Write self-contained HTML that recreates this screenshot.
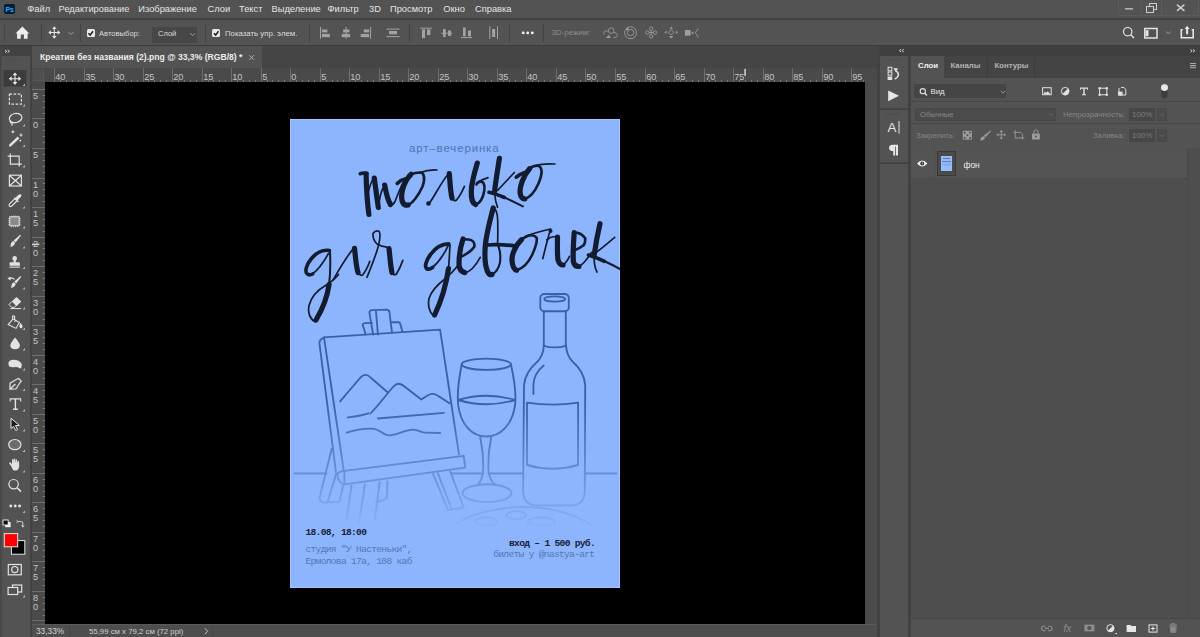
<!DOCTYPE html>
<html><head><meta charset="utf-8">
<style>
*{margin:0;padding:0;box-sizing:border-box}
html,body{width:1200px;height:637px;overflow:hidden;background:#535353;font-family:"Liberation Sans",sans-serif;position:relative}
.a{position:absolute}
.t{position:absolute;white-space:pre;line-height:1;font-family:"Liberation Sans",sans-serif}
.m{font-size:9.3px;color:#e4e4e4;top:4.6px}
svg{position:absolute;overflow:visible}
</style></head><body>
<!-- ===== MENU BAR ===== -->
<div class="a" style="left:0;top:0;width:1200px;height:18px;background:#535353"></div>
<div class="a" style="left:0;top:18px;width:1200px;height:2px;background:#404040"></div>
<!-- PS logo -->
<div class="a" style="left:4px;top:4px;width:11px;height:10px;background:#001e36;border-radius:2px"></div>
<div class="t" style="left:5.6px;top:5.6px;font-size:7px;font-weight:700;color:#31a8ff;letter-spacing:-0.3px">Ps</div>
<div class="t m" style="left:27.3px">Файл</div>
<div class="t m" style="left:58.6px">Редактирование</div>
<div class="t m" style="left:138.3px">Изображение</div>
<div class="t m" style="left:207.5px">Слои</div>
<div class="t m" style="left:239px">Текст</div>
<div class="t m" style="left:271.5px">Выделение</div>
<div class="t m" style="left:327.5px">Фильтр</div>
<div class="t m" style="left:369px">3D</div>
<div class="t m" style="left:390px">Просмотр</div>
<div class="t m" style="left:443.3px">Окно</div>
<div class="t m" style="left:475px">Справка</div>

<!-- ===== OPTIONS BAR ===== -->
<div class="a" style="left:0;top:20px;width:1200px;height:25px;background:#535353"></div>
<div class="a" style="left:0;top:45px;width:1200px;height:1px;background:#3c3c3c"></div>


<div class="a" style="left:4px;top:24px;width:1px;height:17px;background:#474747"></div>
<div class="a" style="left:41px;top:24px;width:1px;height:18px;background:#444"></div>
<div class="a" style="left:80px;top:24px;width:1px;height:18px;background:#444"></div>
<div class="a" style="left:205px;top:24px;width:1px;height:18px;background:#444"></div>
<div class="a" style="left:309px;top:24px;width:1px;height:18px;background:#444"></div>
<div class="a" style="left:409px;top:24px;width:1px;height:18px;background:#444"></div>
<div class="a" style="left:509px;top:24px;width:1px;height:18px;background:#444"></div>
<div class="a" style="left:543px;top:24px;width:1px;height:18px;background:#444"></div>
<!-- checkbox 1 -->
<div class="a" style="left:86.5px;top:29px;width:8px;height:8px;background:#e8e8e8;border-radius:1.5px"></div>
<div class="t" style="left:99px;top:29.8px;font-size:7.6px;color:#dcdcdc">Автовыбор:</div>
<!-- dropdown -->
<div class="a" style="left:152px;top:27px;width:45px;height:16px;background:#474747"></div>
<div class="t" style="left:158px;top:29.8px;font-size:7.5px;color:#dcdcdc">Слой</div>
<!-- checkbox 2 -->
<div class="a" style="left:212px;top:29px;width:8px;height:8px;background:#e8e8e8;border-radius:1.5px"></div>
<div class="t" style="left:225px;top:29.8px;font-size:7.8px;color:#dcdcdc">Показать упр. элем.</div>
<div class="t" style="left:551.3px;top:29.1px;font-size:8px;color:#8c8c8c">3D-режим:</div>

<!-- ===== TOOLBAR ===== -->
<div class="a" style="left:0;top:46px;width:30px;height:591px;background:#535353"></div>
<div class="a" style="left:0;top:46px;width:30px;height:10px;background:#424242"></div>
<div class="a" style="left:30px;top:46px;width:2px;height:591px;background:#424242"></div>

<!-- ===== DOCUMENT AREA ===== -->
<div class="a" style="left:32px;top:46px;width:845px;height:22px;background:#454545"></div>
<div class="a" style="left:32px;top:46px;width:230px;height:22px;background:#535353"></div>
<!-- rulers -->
<div class="a" style="left:32px;top:68px;width:845px;height:14px;background:#4a4a4a"></div>
<div class="a" style="left:32px;top:82px;width:13px;height:542px;background:#4a4a4a"></div>
<div class="a" style="left:32.5px;top:69px;width:11.5px;height:12px;background:#4f4f4f;border-right:1px solid #575757;border-bottom:1px solid #575757"></div>
<!-- pasteboard -->
<div class="a" style="left:45px;top:82px;width:820px;height:542px;background:#000"></div>
<div class="a" style="left:865px;top:82px;width:12px;height:542px;background:#4b4b4b"></div>
<!-- status bar -->
<div class="a" style="left:32px;top:624px;width:845px;height:13px;background:#4e4e4e"></div>

<!-- ===== DOCK ===== -->
<div class="a" style="left:877px;top:46px;width:3px;height:591px;background:#424242"></div>
<div class="a" style="left:880px;top:46px;width:320px;height:10px;background:#3f3f3f"></div>
<div class="a" style="left:880px;top:56px;width:28px;height:581px;background:#535353"></div>
<div class="a" style="left:908px;top:56px;width:3px;height:581px;background:#424242"></div>
<div class="a" style="left:911px;top:56px;width:289px;height:22px;background:#444444"></div>
<div class="a" style="left:911px;top:56px;width:33px;height:22px;background:#535353"></div>
<div class="a" style="left:911px;top:78px;width:289px;height:559px;background:#4e4e4e"></div>
<div class="a" style="left:911px;top:78px;width:289px;height:70px;background:#535353"></div>


<!-- tab title -->
<div class="t" style="left:40px;top:53.2px;font-size:8.6px;font-weight:700;color:#ececec">Креатив без названия (2).png @ 33,3% (RGB/8) *</div>
<!-- status bar -->
<div class="a" style="left:32px;top:624px;width:845px;height:1px;background:#5a5a5a"></div>
<div class="a" style="left:69px;top:625px;width:1px;height:12px;background:#474747"></div>
<div class="a" style="left:212px;top:625px;width:1px;height:12px;background:#474747"></div>
<div class="t" style="left:36px;top:627.4px;font-size:8.3px;color:#d6d6d6">33,33%</div>
<div class="t" style="left:89px;top:627.6px;font-size:7.8px;color:#cfcfcf">55,99 см x 79,2 см (72 ppi)</div>
<!-- layers panel -->
<div class="t" style="left:918px;top:61.6px;font-size:7.8px;font-weight:700;color:#f0f0f0">Слои</div>
<div class="t" style="left:950.5px;top:61.6px;font-size:7.8px;font-weight:700;color:#b4b4b4">Каналы</div>
<div class="t" style="left:994.6px;top:61.6px;font-size:7.8px;font-weight:700;color:#b4b4b4">Контуры</div>
<div class="a" style="left:986.5px;top:57px;width:1px;height:21px;background:#3c3c3c"></div>
<div class="a" style="left:1034px;top:57px;width:1px;height:21px;background:#3c3c3c"></div>
<div class="a" style="left:914.3px;top:84.4px;width:92px;height:14px;background:#454545"></div>
<div class="t" style="left:930.5px;top:88.2px;font-size:7.8px;color:#e8e8e8">Вид</div>
<div class="a" style="left:911px;top:100.5px;width:289px;height:1px;background:#474747"></div>
<div class="a" style="left:914.5px;top:107.6px;width:141px;height:13.6px;background:#4b4b4b;border:1px solid #474747"></div>
<div class="t" style="left:920px;top:110.6px;font-size:7.6px;color:#868686">Обычные</div>
<div class="t" style="left:1063px;top:110.8px;font-size:7.9px;color:#878787">Непрозрачность:</div>
<div class="a" style="left:1129px;top:108px;width:26px;height:12.5px;background:#474747"></div>
<div class="a" style="left:1157px;top:108px;width:10px;height:12.5px;background:#4b4b4b;border:1px solid #474747"></div>
<div class="t" style="left:1132px;top:110.6px;font-size:7.9px;color:#7e7e7e">100%</div>
<div class="a" style="left:911px;top:123px;width:289px;height:1px;background:#474747"></div>
<div class="t" style="left:916px;top:131.6px;font-size:7.7px;color:#878787">Закрепить:</div>
<div class="t" style="left:1093px;top:132.2px;font-size:7.6px;color:#878787">Заливка:</div>
<div class="a" style="left:1129px;top:129px;width:26px;height:13px;background:#474747"></div>
<div class="a" style="left:1157px;top:129px;width:10px;height:13px;background:#4b4b4b;border:1px solid #474747"></div>
<div class="t" style="left:1132px;top:131.8px;font-size:7.9px;color:#7e7e7e">100%</div>
<!-- layer row -->
<div class="a" style="left:911px;top:148px;width:276px;height:30.5px;background:#545454"></div>
<div class="a" style="left:934px;top:148px;width:1px;height:30.8px;background:#4e4e4e"></div>
<div class="a" style="left:1187px;top:148px;width:13px;height:470px;background:#4e4e4e;border-left:1px solid #484848"></div>
<div class="a" style="left:911px;top:178.4px;width:276px;height:1px;background:#494949"></div>
<div class="a" style="left:936.5px;top:150.8px;width:19px;height:25px;background:#4a4a4a;border:1px solid #383838"></div>
<div class="a" style="left:940.6px;top:155.8px;width:11.8px;height:15.5px;background:#96bcfd"></div>
<div class="a" style="left:943px;top:158.2px;width:7px;height:1px;background:#5b78b0"></div>
<div class="a" style="left:941.5px;top:160.6px;width:9.5px;height:1px;background:#5b78b0"></div>
<div class="a" style="left:942.5px;top:162.8px;width:8px;height:3.5px;background:#8aaee8"></div>
<div class="t" style="left:963.5px;top:160.6px;font-size:8.4px;color:#ececec">фон</div>
<!-- layers bottom bar -->
<div class="a" style="left:911px;top:618px;width:289px;height:19px;background:#535353;border-top:1px solid #464646"></div>

<!-- POSTER -->
<div class="a" style="left:289.5px;top:118.5px;width:330.5px;height:469px;background:#8cb5fd;overflow:hidden;box-shadow:inset 0 0 0 1px #a4c5fc">
<svg width="330.5" height="469" viewBox="289.5 118.5 330.5 469" style="left:0;top:0">
<defs>
<linearGradient id="fade" x1="0" y1="0" x2="0" y2="1" gradientUnits="objectBoundingBox">
<stop offset="0" stop-color="#fff"/>
<stop offset="0.47" stop-color="#fff"/>
<stop offset="1" stop-color="#000"/>
</linearGradient>
<mask id="m" maskUnits="userSpaceOnUse" x="289.5" y="290" width="330.5" height="240">
<rect x="289.5" y="290" width="330.5" height="240" fill="url(#fade)"/>
</mask>
</defs>

<!-- script lettering -->
<g fill="none" stroke="#121b30" stroke-linecap="round" stroke-linejoin="round">
<g stroke-width="5.2">
<path d="M365.6 173.5 C365.8 185 366.5 200 368.4 214"/>
<path d="M373.8 177.5 C375 186 376.5 198 377.8 207"/>
<path d="M384.2 184.6 C385.5 192 387.5 200 390 204"/>
<path d="M410.5 173.8 C404 180 400 192 401.5 200 Q403 205.5 407.5 204.5"/>
<path d="M448.8 173.2 C449.5 182 450 192 451.5 197.5"/>
<path d="M476.8 162.6 C474 172 471 182 470.8 190.5 C470.5 197 472 203 475.1 204"/>
<path d="M498.9 157.8 C497 170 495 182 494.1 191"/>
<path d="M529 168.2 C523 175 519 186 519.6 192.7 Q520.5 198.5 524.3 198.4"/>
<path d="M328.9 250 C322 249 316 252 311 258 C306 264 304.5 270 306 272.5 Q308 275.5 312 273.5" stroke-width="3.6"/>
<path d="M328.6 284 C327 295 323 307 315.5 319.5"/>
<path d="M354 247.8 C355 256 355.5 266 357.5 272"/>
<path d="M388.5 248 C389.5 256 390 266 391.5 272"/>
<path d="M448.2 243.4 C441 243.5 435 247 430 254 C425.5 260 424 266 426 268 Q428.5 269.5 432 267" stroke-width="3.8"/>
<path d="M448 268 C446 282 441 300 434.1 314.5"/>
<path d="M462.5 238.5 C460 246 458.5 256 458.5 264 Q459 271 464.4 272.1"/>
<path d="M492.7 207.4 C490 218 486 232 484.8 245 C484 255 484.5 265 487 271 Q489 275 491.5 274"/>
<path d="M521 239.2 C515 245 511 254 511.5 260.4 Q512.5 269 516.2 269.8"/>
<path d="M557 236.5 C557 245 556.5 253 557.5 259.5 Q559 264.5 562.5 264.5"/><path d="M573.7 232.2 C573 242 572.2 252 572.9 261.3 Q574 266 578.4 266"/>
<path d="M599.5 223.2 C597 234 595 245 593.6 255"/>
</g>
<g stroke-width="3.6">
<path d="M396.7 182.9 Q400 179.5 404.5 178.6"/>
<path d="M515.8 176.7 Q519.5 173.5 524.3 172"/>
<path d="M488.5 191.8 C494 193 499 195 504 197"/><path d="M503 196.6 C510 199.5 516 202.5 522.4 205.9" stroke-width="2"/>
<path d="M486.5 244.5 Q500 243.5 514 245.4"/>
<path d="M588 254.5 C594 256.5 599 258.5 604 260.8"/><path d="M603 260.3 C610 263.5 615 266 620.7 269.2" stroke-width="2.2"/>
<path d="M359.7 173.2 Q362.5 172.2 366.5 172.8"/>
</g>
<g stroke-width="2.6">
<path d="M407.5 204.5 C412 203 418 195 422 186 C425 178 423.5 172 420 172 Q414 172 410.5 173.8"/>
<path d="M524.3 198.4 C529 197 534 192 538 183 C541 176 542.5 168 538.4 165.4 Q533 164.5 529 168.2"/>
<path d="M475.1 204 C479 203 482.5 198 483.8 190 C484.6 184 483 180 478.5 181.5 Q476 182.5 476 184"/>
<path d="M516.2 269.8 C522 268 528 262 531.6 254.5 C535 247 537 240 536 237 Q533 233.5 527 235.5 Q523.5 237 521 239.2"/>
<path d="M462 255.6 C467 253 472 249.5 473.8 246.2 C474.5 242 472 239 468 239 Q464 239 462.5 238.5"/>
<path d="M573.7 232.2 Q580 231.5 584.7 237.7 Q585 242.5 583.1 244.8 Q579 248 574.5 249.5"/>
</g>
<g stroke-width="1.7">
<path d="M367 194 C369 186 371 180 373.5 177.5"/>
<path d="M378.6 201.5 C380 193 382 187 384.4 184.8"/>
<path d="M390 204 Q392.5 205 394.5 201 C397 195 400 186 404.5 178.6"/>
<path d="M419 172.2 Q428 169 436.5 169.5"/>
<path d="M427.6 203 Q430 202 432 198 C437 190 442 180 448.3 173"/>
<path d="M451.5 197.5 Q453.5 201.5 456 199.5 Q460 195 463.9 185.9"/>
<path d="M478 181 Q483 178.5 487.5 177.1"/>
<path d="M494.1 191 C494.3 198 495.5 203 497 206.8"/>
<path d="M513.9 172 C508 178 502 185 497 189.9"/>
<path d="M532.8 165.4 Q543 162.8 554.5 163.5"/>
<path d="M312 273.5 C318 269 323 262 328 253"/>
<path d="M329.5 250.5 C330 262 330 273 328.6 284" stroke-width="2"/>
<path d="M314 321 C309 318 307 311 308.5 305 C311 296 318 289 325 285 C330 282 334 279 338 274"/>
<path d="M332.5 279.7 C338 270 346 256 353.3 247.6"/>
<path d="M357.5 272 Q359.5 275.8 362 274.5 Q366 270 369.3 260.8"/>
<path d="M366.5 276.8 C370 268 375 256 377.8 245.7 C379.5 239 380 233 378.5 230.8 Q375 229.5 372.5 233 Q372 239 376.5 243.5 Q381 246 386.3 246.7"/>
<path d="M391.5 272 Q393 275.5 396 273.5 Q399.5 268 402.3 259.9"/>
<path d="M432 267 C438 262 443.5 254 448.2 244.1"/>
<path d="M449.5 244.5 C449 252 448.8 260 448 268"/>
<path d="M432.7 315 C428.5 311 427 304 428.5 298 C431 290 437 284 445 278 C451 273 455 268 459.5 262.5"/>
<path d="M464.4 272.1 Q472 271 479.7 256.8"/>
<path d="M492.7 207.4 Q497 209 497.2 220 C497.4 230 497.5 237 497 244"/><path d="M491.5 274 Q497.5 271 499.5 262 Q500.5 252 498 246" stroke-width="2.1"/>
<path d="M512 246 Q514 246.2 516 246"/>
<path d="M525.7 235.6 Q535 232 550 228.5"/>
<path d="M542.3 258.1 C544.5 249 547.5 237 550.1 229.1"/><path d="M546.2 239.3 Q551 235.5 556.4 236.1"/><path d="M562.5 264.5 Q566 262 569 255.8"/>
<path d="M578.4 266 Q584 263 591 251.9"/>
<path d="M593.6 255 C593.5 262 594.5 268 596.5 271.5"/>
<path d="M614.2 236.8 C607 243 599 250 591.2 255"/>
</g>
</g>
<circle cx="428" cy="203" r="2.3" fill="#121b30"/><circle cx="550" cy="230.6" r="2" fill="#121b30"/>

<!-- illustration -->
<g mask="url(#m)" fill="none" stroke="#3862a8" stroke-width="1.85" stroke-linecap="round" stroke-linejoin="round">
<!-- table -->
<path d="M294 473 H326 M450.5 473 H482.4 M487.8 473 H522.6 M584.4 473 H616"/>
<!-- easel post -->
<path d="M372.6 334 L368.9 312.3 Q369 309.8 371.5 309.6 L386.2 309.2 Q388.7 309.4 388.9 311.5 L391.5 332"/>
<path d="M375.5 311 L377.4 334"/>
<path d="M365.1 334 L362.3 324.4 Q362.4 322.8 364 322.7 L371.6 322.4"/>
<path d="M390.6 321.7 H398 Q399.4 321.8 399.6 323 L401.9 331.1"/>
<!-- canvas -->
<path d="M323.6 336.8 L439.6 329.2 L458.5 453.8"/>
<path d="M323.6 336.8 L320.4 339 Q318.7 340.4 318.9 342.6 L335.6 472.5"/>
<path d="M323.6 337.7 L343.2 469.7"/>
<!-- ledge -->
<path d="M343.9 470.4 L463.2 455.3 L464.7 467.1 L343.9 483.8"/>
<path d="M343.9 470.4 Q336.8 471 336.8 475 Q337.5 482 343.9 483.8 Z"/>
<!-- legs -->
<path d="M331.2 448.5 L319.2 496.5 Q318.8 501.5 322.5 502 L339 501.4 L342.5 485.5"/>
<path d="M335.4 474 L327 502"/>
<path d="M351 485.2 L346 520 M364.4 483.8 L358.7 522"/>
<path d="M379.2 481.7 L374.3 519 M387 481 L386.3 498 L375.7 502.1"/>
<path d="M432.6 473.4 L447.5 509.5 L463.2 507.1 L449.8 471 M437.3 472.6 L450.6 507.1"/>
<!-- mountains -->
<path d="M339.6 400.9 L360 377 Q365.1 371.6 370 377 L386.8 391.5"/>
<path d="M369.8 413.2 C378 405 385 395 393 386 Q398.1 380.5 404 386 L420.8 399 L427 395 Q432.1 391.8 437 395 L449 402.8"/>
<path d="M347.2 417 C356 415.8 362 415 367.9 412.8"/>
<path d="M377.4 418 L443.4 412.3"/>
<path d="M346.2 432.1 C356 429 366 427.5 373.6 428.3 C380 429.5 383 435 388.7 434.9 C398 434.5 405 428.8 413.2 429.2 C418 429.5 420 432.1 424.5 432.1 L439.6 432.5"/>
<!-- glass -->
<ellipse cx="485.8" cy="363.8" rx="24.6" ry="5.6"/>
<path d="M461.2 363.8 C458 380 456.5 395 457.8 405 C460.5 425 472 436 485.7 436 C499.5 436 511.5 425 514.5 405 C515.8 395 514 380 510.4 363.8"/>
<path d="M457.6 399.5 Q486 391 514.8 399.5 Q486 408 457.6 399.5"/>
<path d="M479.7 436.5 Q483 452 482.8 467.1 Q482.6 480 476.5 484.8 M490.6 437 Q487.5 452 487.8 467.1 Q488 480 495.5 484.6"/>
<ellipse cx="486.5" cy="492.6" rx="24.5" ry="8.9"/>
<!-- bottle -->
<rect x="539.8" y="293.5" width="28.5" height="17.2" rx="4"/>
<ellipse cx="554.2" cy="298.5" rx="10.5" ry="2.6"/>
<path d="M543.3 310.7 V345.3 M565.3 310.7 V345.3"/>
<path d="M543.3 345.3 Q554 348.4 565.5 345.3"/>
<path d="M543.3 345.3 C543 352 541 357 537 361 C530 367 524.3 374 523.5 385 L522.6 490 Q522.6 504.5 536 505 H571 Q584.3 504.5 584.3 490 L584.7 385 C584 374 579 367 572 361 C568 357 566 352 565.5 345.3"/>
<path d="M543.3 365.1 C537 370 533 376 532.9 385 V393.6"/>
<path d="M526.5 402.2 Q552 406 577.6 402.2 V464.5 Q552 472 526.5 464.5 Z"/>
<!-- plate -->
<path d="M455 523 C475 512 500 506.5 523.8 506.5 C550 506.5 575 514 592.5 525.8"/>
<ellipse cx="485.5" cy="521" rx="11" ry="4"/>
<ellipse cx="515.6" cy="514.6" rx="9.6" ry="4"/>
<ellipse cx="541" cy="521" rx="13.7" ry="4"/>
</g>
</svg>
<div class="t" style="left:119.5px;top:24.2px;font-size:11.5px;letter-spacing:0.85px;color:#5074b4">арт–вечеринка</div>

<div class="t" style="left:16px;top:409.8px;font-family:'Liberation Mono',monospace;font-size:9.6px;letter-spacing:-0.7px;font-weight:700;color:#16213b">18.08, 18:00</div>
<div class="t" style="left:16px;top:426.3px;font-family:'Liberation Mono',monospace;font-size:9.6px;letter-spacing:-0.7px;color:#5677b3">студия "У Настеньки",</div>
<div class="t" style="left:16px;top:438.8px;font-family:'Liberation Mono',monospace;font-size:9.6px;letter-spacing:-0.7px;color:#5677b3">Ермолова 17а, 108 каб</div>
<div class="t" style="right:25px;top:420.3px;font-family:'Liberation Mono',monospace;font-size:9.6px;letter-spacing:-0.7px;font-weight:700;color:#16213b">вход – 1 500 руб.</div>
<div class="t" style="right:25.6px;top:431.8px;font-family:'Liberation Mono',monospace;font-size:9.6px;letter-spacing:-0.7px;color:#5677b3">билеты у @nastya-art</div>
</div>



<!-- ===== ICON OVERLAY ===== -->
<svg class="a" style="left:0;top:0" width="1200" height="637" viewBox="0 0 1200 637">

<!-- rulers -->
<g fill="#c4c4c4" font-family="Liberation Sans" font-size="9.2">
<text x="55.2" y="80.2">40</text>
<text x="85.2" y="80.2">35</text>
<text x="114.2" y="80.2">30</text>
<text x="144.2" y="80.2">25</text>
<text x="173.2" y="80.2">20</text>
<text x="203.2" y="80.2">15</text>
<text x="232.2" y="80.2">10</text>
<text x="262.2" y="80.2">5</text>
<text x="291.2" y="80.2">0</text>
<text x="321.2" y="80.2">5</text>
<text x="350.2" y="80.2">10</text>
<text x="380.2" y="80.2">15</text>
<text x="409.2" y="80.2">20</text>
<text x="439.2" y="80.2">25</text>
<text x="468.2" y="80.2">30</text>
<text x="498.2" y="80.2">35</text>
<text x="527.2" y="80.2">40</text>
<text x="557.2" y="80.2">45</text>
<text x="586.2" y="80.2">50</text>
<text x="616.2" y="80.2">55</text>
<text x="646.2" y="80.2">60</text>
<text x="675.2" y="80.2">65</text>
<text x="705.2" y="80.2">70</text>
<text x="734.2" y="80.2">75</text>
<text x="764.2" y="80.2">80</text>
<text x="793.2" y="80.2">85</text>
<text x="823.2" y="80.2">90</text>
<text x="852.2" y="80.2">95</text>
<text x="32.9" y="98.9">5</text>
<text x="32.9" y="127.9">0</text>
<text x="32.9" y="157.9">5</text>
<text x="32.9" y="187.9">1</text>
<text x="32.9" y="197.3">0</text>
<text x="32.9" y="216.9">1</text>
<text x="32.9" y="226.3">5</text>
<text x="32.9" y="246.9">2</text>
<text x="32.9" y="256.3">0</text>
<text x="32.9" y="275.9">2</text>
<text x="32.9" y="285.3">5</text>
<text x="32.9" y="305.9">3</text>
<text x="32.9" y="315.3">0</text>
<text x="32.9" y="334.9">3</text>
<text x="32.9" y="344.3">5</text>
<text x="32.9" y="364.9">4</text>
<text x="32.9" y="374.3">0</text>
<text x="32.9" y="393.9">4</text>
<text x="32.9" y="403.3">5</text>
<text x="32.9" y="423.9">5</text>
<text x="32.9" y="433.3">0</text>
<text x="32.9" y="452.9">5</text>
<text x="32.9" y="462.3">5</text>
<text x="32.9" y="482.9">6</text>
<text x="32.9" y="492.3">0</text>
<text x="32.9" y="511.9">6</text>
<text x="32.9" y="521.3">5</text>
<text x="32.9" y="541.9">7</text>
<text x="32.9" y="551.3">0</text>
<text x="32.9" y="570.9">7</text>
<text x="32.9" y="580.3">5</text>
<text x="32.9" y="600.9">8</text>
<text x="32.9" y="610.3">0</text>
</g>
<path d="M54.5 68.5 V82 M84.5 68.5 V82 M113.5 68.5 V82 M143.5 68.5 V82 M172.5 68.5 V82 M202.5 68.5 V82 M231.5 68.5 V82 M261.5 68.5 V82 M290.5 68.5 V82 M320.5 68.5 V82 M349.5 68.5 V82 M379.5 68.5 V82 M408.5 68.5 V82 M438.5 68.5 V82 M467.5 68.5 V82 M497.5 68.5 V82 M526.5 68.5 V82 M556.5 68.5 V82 M585.5 68.5 V82 M615.5 68.5 V82 M645.5 68.5 V82 M674.5 68.5 V82 M704.5 68.5 V82 M733.5 68.5 V82 M763.5 68.5 V82 M792.5 68.5 V82 M822.5 68.5 V82 M851.5 68.5 V82 M32 89.5 H45 M32 118.5 H45 M32 148.5 H45 M32 178.5 H45 M32 207.5 H45 M32 237.5 H45 M32 266.5 H45 M32 296.5 H45 M32 325.5 H45 M32 355.5 H45 M32 384.5 H45 M32 414.5 H45 M32 443.5 H45 M32 473.5 H45 M32 502.5 H45 M32 532.5 H45 M32 561.5 H45 M32 591.5 H45 M32 620.5 H45" stroke="#6e6e6e" stroke-width="1"/>
<path d="M60.5 80 V82 M66.5 80 V82 M72.5 80 V82 M78.5 80 V82 M89.5 80 V82 M95.5 80 V82 M101.5 80 V82 M107.5 80 V82 M119.5 80 V82 M125.5 80 V82 M131.5 80 V82 M137.5 80 V82 M148.5 80 V82 M154.5 80 V82 M160.5 80 V82 M166.5 80 V82 M178.5 80 V82 M184.5 80 V82 M190.5 80 V82 M196.5 80 V82 M208.5 80 V82 M213.5 80 V82 M219.5 80 V82 M225.5 80 V82 M237.5 80 V82 M243.5 80 V82 M249.5 80 V82 M255.5 80 V82 M267.5 80 V82 M272.5 80 V82 M278.5 80 V82 M284.5 80 V82 M296.5 80 V82 M302.5 80 V82 M308.5 80 V82 M314.5 80 V82 M326.5 80 V82 M332.5 80 V82 M337.5 80 V82 M343.5 80 V82 M355.5 80 V82 M361.5 80 V82 M367.5 80 V82 M373.5 80 V82 M385.5 80 V82 M391.5 80 V82 M397.5 80 V82 M402.5 80 V82 M414.5 80 V82 M420.5 80 V82 M426.5 80 V82 M432.5 80 V82 M444.5 80 V82 M450.5 80 V82 M456.5 80 V82 M461.5 80 V82 M473.5 80 V82 M479.5 80 V82 M485.5 80 V82 M491.5 80 V82 M503.5 80 V82 M509.5 80 V82 M515.5 80 V82 M521.5 80 V82 M532.5 80 V82 M538.5 80 V82 M544.5 80 V82 M550.5 80 V82 M562.5 80 V82 M568.5 80 V82 M574.5 80 V82 M580.5 80 V82 M591.5 80 V82 M597.5 80 V82 M603.5 80 V82 M609.5 80 V82 M621.5 80 V82 M627.5 80 V82 M633.5 80 V82 M639.5 80 V82 M650.5 80 V82 M656.5 80 V82 M662.5 80 V82 M668.5 80 V82 M680.5 80 V82 M686.5 80 V82 M692.5 80 V82 M698.5 80 V82 M709.5 80 V82 M715.5 80 V82 M721.5 80 V82 M727.5 80 V82 M739.5 80 V82 M745.5 80 V82 M751.5 80 V82 M757.5 80 V82 M769.5 80 V82 M774.5 80 V82 M780.5 80 V82 M786.5 80 V82 M798.5 80 V82 M804.5 80 V82 M810.5 80 V82 M816.5 80 V82 M828.5 80 V82 M834.5 80 V82 M839.5 80 V82 M845.5 80 V82 M857.5 80 V82 M863.5 80 V82 M42.5 95.5 H45 M42.5 101.5 H45 M42.5 107.5 H45 M42.5 113.5 H45 M42.5 124.5 H45 M42.5 130.5 H45 M42.5 136.5 H45 M42.5 142.5 H45 M42.5 154.5 H45 M42.5 160.5 H45 M42.5 166.5 H45 M42.5 172.5 H45 M42.5 183.5 H45 M42.5 189.5 H45 M42.5 195.5 H45 M42.5 201.5 H45 M42.5 213.5 H45 M42.5 219.5 H45 M42.5 225.5 H45 M42.5 231.5 H45 M42.5 243.5 H45 M42.5 248.5 H45 M42.5 254.5 H45 M42.5 260.5 H45 M42.5 272.5 H45 M42.5 278.5 H45 M42.5 284.5 H45 M42.5 290.5 H45 M42.5 302.5 H45 M42.5 307.5 H45 M42.5 313.5 H45 M42.5 319.5 H45 M42.5 331.5 H45 M42.5 337.5 H45 M42.5 343.5 H45 M42.5 349.5 H45 M42.5 361.5 H45 M42.5 367.5 H45 M42.5 372.5 H45 M42.5 378.5 H45 M42.5 390.5 H45 M42.5 396.5 H45 M42.5 402.5 H45 M42.5 408.5 H45 M42.5 420.5 H45 M42.5 426.5 H45 M42.5 431.5 H45 M42.5 437.5 H45 M42.5 449.5 H45 M42.5 455.5 H45 M42.5 461.5 H45 M42.5 467.5 H45 M42.5 479.5 H45 M42.5 485.5 H45 M42.5 491.5 H45 M42.5 496.5 H45 M42.5 508.5 H45 M42.5 514.5 H45 M42.5 520.5 H45 M42.5 526.5 H45 M42.5 538.5 H45 M42.5 544.5 H45 M42.5 550.5 H45 M42.5 556.5 H45 M42.5 567.5 H45 M42.5 573.5 H45 M42.5 579.5 H45 M42.5 585.5 H45 M42.5 597.5 H45 M42.5 603.5 H45 M42.5 609.5 H45 M42.5 615.5 H45" stroke="#7a7a7a" stroke-width="1"/>
<rect x="744.3" y="68.8" width="1.6" height="7.1" fill="#cfcfcf"/>
<rect x="32" y="243.6" width="7.3" height="1.6" fill="#cfcfcf"/>
<!-- toolbar -->
<rect x="0" y="46" width="1.6" height="591" fill="#474747"/>
<path d="M5 50 L6.8 51.3 L5 52.6 M7.6 50 L9.4 51.3 L7.6 52.6" fill="none" stroke="#dcdcdc" stroke-width="0.9"/>
<line x1="7" y1="60.3" x2="22" y2="60.3" stroke="#4a4a4a" stroke-width="1" stroke-dasharray="1 1"/>
<rect x="3.4" y="70" width="23" height="16.6" fill="#3c3c3c"/>
<g fill="#b4b4b4">
<path d="M25 83.5 V86 H22.5Z"/><path d="M25 104 V106.5 H22.5Z"/><path d="M25 124 V126.5 H22.5Z"/><path d="M25 144.5 V147 H22.5Z"/>
<path d="M25 165 V167.5 H22.5Z"/><path d="M25 206 V208.5 H22.5Z"/><path d="M25 226 V228.5 H22.5Z"/><path d="M25 246 V248.5 H22.5Z"/>
<path d="M25 266.5 V269 H22.5Z"/><path d="M25 287 V289.5 H22.5Z"/><path d="M25 307 V309.5 H22.5Z"/><path d="M25 327.5 V330 H22.5Z"/>
<path d="M25 348 V350.5 H22.5Z"/><path d="M25 368 V370.5 H22.5Z"/><path d="M25 388.5 V391 H22.5Z"/><path d="M25 409 V411.5 H22.5Z"/>
<path d="M25 429 V431.5 H22.5Z"/><path d="M25 449.5 V452 H22.5Z"/><path d="M25 470 V472.5 H22.5Z"/><path d="M25 510.5 V513 H22.5Z"/>
<path d="M25 595 V597.5 H22.5Z"/>
</g>
<!-- move -->
<path d="M15 73.8 V83.6 M10.2 78.7 H19.8" stroke="#e8e8e8" stroke-width="1.1"/>
<path d="M15 72.5 l-2.4 2.8 h4.8z M15 84.9 l-2.4 -2.8 h4.8z M8.8 78.7 l2.8 -2.4 v4.8z M21.2 78.7 l-2.8 -2.4 v4.8z" fill="#e8e8e8"/>
<g fill="none" stroke="#e2e2e2" stroke-width="1.2">
<!-- marquee -->
<rect x="9.4" y="94.2" width="12" height="10" stroke-dasharray="2.6 1.6"/>
<!-- lasso -->
<ellipse cx="15.6" cy="118" rx="6.3" ry="4.6" transform="rotate(-12 15.6 118)"/>
<path d="M10.6 120.5 C9.5 122.5 11 123.5 12 122.5 C12.5 123.8 12 124.8 11.8 125.6"/>
<!-- crop -->
<path d="M10.3 153.6 V164.2 H21.9 M7.7 156.2 H19.2 V166.6"/>
<!-- frame -->
<rect x="9.4" y="175.2" width="12" height="10.8"/>
<path d="M9.4 175.2 L21.4 186 M21.4 175.2 L9.4 186"/>
<!-- eyedropper -->
<path d="M14.6 198.8 L9.6 203.8 Q8.6 205.4 9.4 206.2 Q10.2 207 11.8 206 L16.8 201"/>
<!-- pen -->
<path d="M18.6 378.5 L21.3 381.2 L20 382.5 L16 389 L9.9 389.2 L10.1 383.2 L16.6 379.2 Z M10.2 389 L14.2 385"/>
<!-- zoom -->
<circle cx="13.6" cy="484.2" r="4.7"/>
<path d="M16.9 487.5 L21 491.6" stroke-width="1.5"/>
<!-- ellipse -->
<ellipse cx="14.8" cy="444.6" rx="6.1" ry="5.1" fill="#6c6c6c"/>
<!-- quick mask -->
<rect x="8.3" y="564.5" width="13" height="10.3"/>
<circle cx="14.8" cy="569.6" r="3.1"/>
<!-- screen mode -->
<rect x="12.5" y="585" width="9.2" height="7"/>
<rect x="8.1" y="587.5" width="9.6" height="7" fill="#535353"/>
</g>
<g fill="#e2e2e2">
<!-- magic wand -->
<path d="M9.6 144.2 L17.6 136.6 L19.4 138.4 L11.3 146 Q10 147 9.2 146.2 Q8.6 145.2 9.6 144.2Z"/>
<path d="M12.9 129.6 L13.5 131.2 L15.1 131.8 L13.5 132.4 L12.9 134 L12.3 132.4 L10.7 131.8 L12.3 131.2Z"/>
<path d="M21 132.8 L21.6 134.4 L23.2 135 L21.6 135.6 L21 137.2 L20.4 135.6 L18.8 135 L20.4 134.4Z"/>
<circle cx="20.3" cy="140.6" r="0.9"/>
<!-- eyedropper cap -->
<path d="M15.4 197.8 L18.6 194.8 Q20.4 193.6 21.2 194.6 Q22 195.6 20.6 197.2 L17.6 200.2 L19 201.6 L18 202.6 L13.8 198.4 L14.8 197.2Z"/>
<!-- healing -->
<rect x="9.8" y="216.8" width="9.4" height="9" fill="#8a8a8a" stroke="#e2e2e2" stroke-width="1"/>
<!-- brush -->
<path d="M20.2 234.8 L21 235.6 L15.6 242.4 L13.6 240.6 Z"/>
<path d="M13.2 241 L15.2 242.8 Q14.6 245.6 12.2 246.4 Q10.6 246.8 10.2 246.6 Q10.8 245.8 10.8 244.2 Q11 242 13.2 241Z"/>
<!-- stamp -->
<circle cx="14.7" cy="258.4" r="2.3"/>
<rect x="13.7" y="259.5" width="2" height="3.5"/>
<path d="M9.6 263.2 Q9.6 262.2 11 262.2 H18.6 Q19.9 262.2 19.9 263.4 V265.8 H9.6Z"/>
<rect x="9.6" y="266.6" width="10.3" height="1.1"/>
<!-- history brush -->
<path d="M20.6 276 L21.3 276.8 L16.2 283.6 L14.2 281.8 Z"/>
<path d="M13.8 282.2 L15.8 284 Q15.2 286.8 12.8 287.6 Q11.2 288 10.8 287.8 Q11.4 287 11.4 285.4 Q11.6 283.2 13.8 282.2Z"/>
<path d="M7.4 278.6 L10.6 276.4 L10.6 280.6Z"/><path d="M10 278.4 Q13.4 277.6 14.4 279.6" fill="none" stroke="#e2e2e2" stroke-width="1.1"/>
<!-- eraser -->
<path d="M16.4 297 L21.3 301.4 L16.6 306.2 L11.8 301.6Z"/>
<!-- blur drop -->
<path d="M15.1 337.6 Q19.9 343.2 19.9 345.6 Q19.9 349.2 15.1 349.2 Q10.3 349.2 10.3 345.6 Q10.3 343.2 15.1 337.6Z"/>
<!-- dodge -->
<path d="M13.6 359.8 Q19.2 359.8 21.9 364.2 L21.2 368.2 L19.4 368.2 Q17.8 366.4 13.6 367.2 Q8.4 367.6 8.4 363.4 Q8.6 359.8 13.6 359.8Z"/>
<!-- type -->
<path d="M9.6 398.3 H21.2 V401.6 H20.1 V399.6 H16.1 V408.6 H17.8 V409.9 H13 V408.6 H14.7 V399.6 H10.7 V401.6 H9.6Z"/>
<!-- hand -->
<path d="M11.6 466.8 L9.2 463.4 Q8.8 462.2 10 462.2 L12 464 V459.8 Q12.4 458.8 13.2 459.6 V463.6 L13.6 459 Q14.2 458 15 459 V463.4 L15.6 459.6 Q16.4 458.8 17 459.8 V463.6 L17.6 461.2 Q18.4 460.4 19 461.4 L19.2 466 Q19 469.6 16.6 470.6 H13.6 Q12.4 469.6 11.6 466.8Z"/>
<!-- dots -->
<circle cx="10.8" cy="506" r="1.45"/><circle cx="15.2" cy="506" r="1.45"/><circle cx="19.6" cy="506" r="1.45"/>
</g>
<!-- eyedropper tube outline -->
<!-- healing teeth -->
<path d="M11.5 215.6 V217 M13.5 215.6 V217 M15.5 215.6 V217 M17.5 215.6 V217 M11.5 225.8 V227.2 M13.5 225.8 V227.2 M15.5 225.8 V227.2 M17.5 225.8 V227.2 M8.4 218.6 H9.8 M8.4 220.6 H9.8 M8.4 222.6 H9.8 M8.4 224.6 H9.8 M19.2 218.6 H20.6 M19.2 220.6 H20.6 M19.2 222.6 H20.6 M19.2 224.6 H20.6" stroke="#e2e2e2" stroke-width="0.7"/>
<!-- eraser bottom -->
<path d="M11.8 301.6 L9 304.6 L11.6 307.4 L14.2 307.4 L16.6 305.2 M10.4 308.6 H21.2" fill="none" stroke="#e2e2e2" stroke-width="1"/>
<!-- bucket -->
<path d="M13 319 L19.4 322.4 L16 328.4 L8.2 324.6 Z M13 319 L12.4 316.6 Q13.6 315.2 14.6 316.4 L14.8 322" fill="none" stroke="#e2e2e2" stroke-width="1.1"/>
<path d="M20.4 322.8 Q22.6 325.2 22.6 326.6 Q22.6 328.4 21 328.4 Q19.4 328.4 19.4 326.6 Q19.4 325.2 20.4 322.8Z" fill="#e2e2e2"/>
<!-- pen nib detail -->
<circle cx="14.8" cy="384.6" r="0.9" fill="#e2e2e2"/>
<!-- path select arrow -->
<path d="M11 418.3 V428.6 L13.6 426.4 L15.8 430.5 L17.6 429.6 L15.4 425.6 L19.3 425.4 Z" fill="#1a1a1a" stroke="#e8e8e8" stroke-width="1"/>
<!-- default colors -->
<rect x="5.2" y="522" width="5.4" height="5.2" fill="#f0f0f0"/>
<rect x="3" y="520" width="5.2" height="5" fill="#111" stroke="#f0f0f0" stroke-width="0.9"/>
<path d="M18 521.6 H21.4 Q22.8 521.6 22.8 523 V526.6 M16.6 522.8 L18 521.4 L16.6 520.4 M21.6 525.4 L22.8 527.2 L24 525.4" fill="none" stroke="#e0e0e0" stroke-width="0.9"/>
<!-- fg/bg -->
<rect x="11.4" y="540.6" width="13.4" height="13.6" fill="#000" stroke="#e6e6e6" stroke-width="1"/>
<rect x="4.3" y="533.6" width="13.4" height="13.2" fill="#ff0000" stroke="#e6e6e6" stroke-width="1"/>


<!-- tab close -->
<path d="M249.3 55.2 L253.9 59.8 M253.9 55.2 L249.3 59.8" stroke="#b8b8b8" stroke-width="0.9"/>
<!-- status chevron -->
<path d="M204.8 628.2 L207.6 631.2 L204.8 634.2" fill="none" stroke="#c0c0c0" stroke-width="1"/>
<!-- dock header -->
<path d="M901.2 49.2 L899.4 50.6 L901.2 52 M903.8 49.2 L902 50.6 L903.8 52" fill="none" stroke="#d8d8d8" stroke-width="0.9"/>
<path d="M1190.4 49.4 L1192.2 50.8 L1190.4 52.2 M1193 49.4 L1194.8 50.8 L1193 52.2" fill="none" stroke="#d8d8d8" stroke-width="0.9"/>
<!-- narrow column -->
<rect x="880" y="108.4" width="28" height="1.4" fill="#3f3f3f"/>
<rect x="880" y="162.6" width="28" height="1.4" fill="#3f3f3f"/>
<line x1="886" y1="60" x2="900" y2="60" stroke="#474747" stroke-width="1.2" stroke-dasharray="1 0.8"/>
<line x1="886" y1="113.8" x2="900" y2="113.8" stroke="#474747" stroke-width="1.2" stroke-dasharray="1 0.8"/>
<g fill="none" stroke="#e2e2e2" stroke-width="1">
<rect x="888.1" y="67.3" width="3.7" height="3.5"/>
<rect x="888.1" y="72" width="3.7" height="3.2"/>
<path d="M895.2 70.4 Q898.8 72.4 898.3 75.4 Q897.6 78.2 894.7 79" stroke-width="1.6"/>
</g>
<rect x="887.6" y="76.5" width="4.6" height="3.5" fill="#e2e2e2"/>
<path d="M893.5 67.9 L898.2 68.5 L895.5 71.8Z" fill="#e2e2e2"/>
<path d="M888.2 90.4 L899 95.8 L888.2 101.2Z" fill="#e6e6e6"/>
<text x="887.6" y="131.8" font-family="Liberation Sans" font-size="13.4" fill="#e6e6e6">A</text>
<rect x="898.5" y="121" width="1" height="12.6" fill="#e6e6e6"/>
<path d="M893 144.8 H898 V155.6 H896 V146.4 H895.2 V155.6 H893.2 V151 Q889 151 889 147.9 Q889 144.8 893 144.8Z" fill="#e6e6e6"/>
<!-- layers menu -->
<path d="M1190 63.5 H1196 M1190 65.6 H1196 M1190 67.7 H1196" stroke="#a8a8a8" stroke-width="1.1"/>
<!-- search in Вид -->
<circle cx="922.8" cy="91.2" r="2.6" fill="none" stroke="#e0e0e0" stroke-width="1.1"/>
<path d="M924.8 93.2 L927 95.4" stroke="#e0e0e0" stroke-width="1.4"/>
<path d="M1000.8 91 L1003 93.2 L1005.2 91" fill="none" stroke="#b0b0b0" stroke-width="0.8"/>
<path d="M1049 113.4 L1051 115.4 L1053 113.4" fill="none" stroke="#6e6e6e" stroke-width="0.8"/>
<path d="M1160 113.6 L1162 115.6 L1164 113.6" fill="none" stroke="#6e6e6e" stroke-width="0.8"/>
<path d="M1160 134.6 L1162 136.6 L1164 134.6" fill="none" stroke="#6e6e6e" stroke-width="0.8"/>
<!-- filter icons -->
<g fill="none" stroke="#e0e0e0" stroke-width="1">
<rect x="1042.6" y="87.7" width="8.6" height="7"/>
<circle cx="1065.2" cy="91.2" r="3.8"/>
<rect x="1099.6" y="88.2" width="7.2" height="6.6"/>
<path d="M1119 88 V95 H1125.8 V89.6 L1124 87.4 H1121"/>
</g>
<g fill="#e0e0e0">
<path d="M1043.4 94.2 L1045 91.6 L1046.2 93 L1047.6 91.2 L1050.6 94.2Z"/>
<path d="M1067.9 88.5 A3.8 3.8 0 0 1 1062.5 93.9Z"/>
<path d="M1080 87.6 H1088 V90 H1087.2 V88.8 H1084.7 V94 H1085.8 V95.2 H1082.2 V94 H1083.3 V88.8 H1080.8 V90 H1080Z"/>
<circle cx="1099.6" cy="88.2" r="1.2"/><circle cx="1106.8" cy="88.2" r="1.2"/><circle cx="1099.6" cy="94.8" r="1.2"/><circle cx="1106.8" cy="94.8" r="1.2"/>
<rect x="1118" y="91.6" width="4.6" height="4" />
<circle cx="1164.5" cy="87.6" r="3.3" fill="#e6e6e6"/>
</g>
<rect x="1161.4" y="88" width="6.2" height="10.4" rx="3.1" fill="#3e3e3e"/>
<circle cx="1164.5" cy="87.8" r="3.3" fill="#e6e6e6"/>
<!-- lock icons -->
<g fill="#9c9c9c">
<rect x="962.8" y="130.8" width="9.1" height="8.8"/>
<path d="M990.6 130.4 L991.2 131 L985.4 137.2 L983.8 135.8Z M983.4 136.2 L985 137.6 Q984.6 139.6 982.6 140.2 L980 140.4 Q980.8 139.6 980.8 138.2 Q981.2 136.6 983.4 136.2Z"/>
<path d="M1001.3 130 l-1.8 2 h3.6z M1001.3 139.6 l-1.8 -2 h3.6z M996.5 134.8 l2 -1.8 v3.6z M1006.1 134.8 l-2 -1.8 v3.6z"/>
<rect x="1032" y="133.4" width="7.8" height="6.2" rx="0.6"/>
</g>
<g fill="#535353"><rect x="963.8" y="131.8" width="1.8" height="1.8"/><rect x="969.2" y="131.8" width="1.8" height="1.8"/><rect x="966.5" y="134.4" width="1.8" height="1.8"/><rect x="963.8" y="137" width="1.8" height="1.8"/><rect x="969.2" y="137" width="1.8" height="1.8"/><circle cx="1035.9" cy="136.4" r="0.9"/></g>
<g fill="none" stroke="#9c9c9c" stroke-width="0.9">
<path d="M1001.3 132 V137.6 M998.5 134.8 H1004.1"/>
<path d="M1015.2 130.4 V138 H1024.4 M1013.4 132.4 H1020.6 L1022.4 134.2 V139.6"/>
<path d="M1033.8 133.4 V132 Q1033.8 130 1035.9 130 Q1038 130 1038 132 V133.4"/>
</g>
<!-- eye -->
<path d="M917 163.5 Q922.2 157.6 927.4 163.5 Q922.2 169.4 917 163.5Z" fill="#eeeeee"/>
<circle cx="922.2" cy="163.5" r="2" fill="#3a3a3a"/>
<circle cx="922.4" cy="163.2" r="0.6" fill="#cfcfcf"/>
<!-- bottom bar icons -->
<g fill="none" stroke="#8c8c8c" stroke-width="1.1">
<path d="M1045.4 626.2 H1043.6 Q1041.6 626.2 1041.6 628.4 Q1041.6 630.6 1043.6 630.6 H1045.4 M1048.2 626.2 H1050 Q1052 626.2 1052 628.4 Q1052 630.6 1050 630.6 H1048.2 M1044.6 628.4 H1049"/>
</g>
<text x="1063.4" y="631.6" font-family="Liberation Sans" font-style="italic" font-size="10" fill="#8c8c8c">fx</text>
<rect x="1084.4" y="624.6" width="10" height="6.8" fill="#8c8c8c"/>
<circle cx="1089.4" cy="628" r="2.1" fill="#535353"/>
<circle cx="1110.4" cy="628.2" r="3.6" fill="none" stroke="#e6e6e6" stroke-width="1"/>
<path d="M1112.95 625.65 A3.6 3.6 0 0 1 1107.85 630.75Z" fill="#e6e6e6"/>
<path d="M1115 633 H1117.4 L1116.2 634.6Z" fill="#e6e6e6"/>
<path d="M1126.6 625 H1130.4 L1131.4 626 H1136 V632 H1126.6Z" fill="#e6e6e6"/>
<rect x="1149" y="624.9" width="8" height="7.2" fill="none" stroke="#e6e6e6" stroke-width="1"/>
<path d="M1153 626.4 V630.6 M1150.9 628.5 H1155.1" stroke="#e6e6e6" stroke-width="1.1"/>
<path d="M1169.4 625 H1177 M1171.8 625 V623.6 H1174.6 V625 M1170.2 626 H1176.2 L1175.6 632.4 H1170.8Z" fill="none" stroke="#8c8c8c" stroke-width="0.9"/>
<rect x="1171" y="626.6" width="4.4" height="5.2" fill="#8c8c8c"/>

<!-- window controls -->
<path d="M1118.5 0 V13 Q1118.5 15.5 1121 15.5 H1198.5 V0" fill="none" stroke="#5e5e5e" stroke-width="0.8"/>
<line x1="1141" y1="0" x2="1141" y2="15.5" stroke="#5e5e5e" stroke-width="0.8"/>
<line x1="1161.5" y1="0" x2="1161.5" y2="15.5" stroke="#5e5e5e" stroke-width="0.8"/>
<rect x="1125" y="8.2" width="8" height="1.3" fill="#c8c8c8"/>
<rect x="1149.5" y="3.5" width="7" height="6" fill="none" stroke="#c8c8c8" stroke-width="1.1"/>
<rect x="1146.5" y="6.5" width="7" height="6" fill="#535353" stroke="#c8c8c8" stroke-width="1.1"/>
<path d="M1177 4.6 L1184.4 10.9 M1184.4 4.6 L1177 10.9" stroke="#cccccc" stroke-width="1.6"/>
<!-- home -->
<path d="M22.4 26.4 L15.5 33.4 H17.1 V38.8 H20.8 V34.5 H23.9 V38.8 H27.6 V33.4 H29.3 Z" fill="#ececec"/>
<!-- move -->
<path d="M54.3 27.8 V37.2 M49.8 32.5 H58.8" stroke="#e6e6e6" stroke-width="1"/>
<path d="M54.3 26.3 l-2.2 2.6 h4.4 z M54.3 38.7 l-2.2 -2.6 h4.4 z M48.3 32.5 l2.6 -2.2 v4.4 z M60.3 32.5 l-2.6 -2.2 v4.4 z" fill="#e6e6e6"/>
<path d="M68.6 32.1 L71 34.5 L73.4 32.1" fill="none" stroke="#a8a8a8" stroke-width="0.9"/>
<!-- checkmarks -->
<path d="M88.4 33.2 L90.2 35.1 L93 31.3" fill="none" stroke="#1e1e1e" stroke-width="1.5"/>
<path d="M213.9 33.2 L215.7 35.1 L218.5 31.3" fill="none" stroke="#1e1e1e" stroke-width="1.5"/>
<path d="M190.3 33.3 L192.6 35.6 L194.9 33.3" fill="none" stroke="#a8a8a8" stroke-width="0.9"/>
<!-- align icons -->
<g fill="#a2a2a2">
<rect x="320" y="26.9" width="1" height="11.8"/><rect x="321.9" y="29.5" width="5.5" height="2.9"/><rect x="321.9" y="33.9" width="8" height="3.3"/>
<rect x="345.6" y="26.9" width="1" height="11.8"/><rect x="343.1" y="29.5" width="6.3" height="2.9"/><rect x="341.7" y="33.9" width="8.4" height="3.3"/>
<rect x="370.1" y="26.9" width="1" height="11.8"/><rect x="363.7" y="29.5" width="5.5" height="2.9"/><rect x="360.7" y="33.9" width="8.5" height="3.3"/>
<rect x="386.4" y="28.6" width="13.2" height="1"/><rect x="389" y="31" width="8" height="3.3"/><rect x="386.4" y="36.1" width="13.2" height="1"/>
<rect x="420.4" y="27.7" width="11.5" height="1"/><rect x="422" y="29.4" width="3" height="8.8"/><rect x="427" y="29.4" width="3.4" height="5.7"/>
<rect x="441.1" y="32.7" width="11.2" height="1"/><rect x="443" y="29" width="2.7" height="8"/><rect x="448" y="30.5" width="3.1" height="5.4"/>
<rect x="461" y="37.1" width="11.2" height="1"/><rect x="463" y="27.5" width="2.7" height="8.8"/><rect x="468" y="30.5" width="3" height="5.8"/>
<rect x="489.3" y="26.3" width="1" height="12.7"/><rect x="492.1" y="29" width="3.1" height="8"/><rect x="497" y="26.3" width="1" height="12.7"/>
</g>
<circle cx="523.2" cy="32.9" r="1.45" fill="#f0f0f0"/><circle cx="527.7" cy="32.9" r="1.45" fill="#f0f0f0"/><circle cx="532.3" cy="32.9" r="1.45" fill="#f0f0f0"/>
<!-- 3D icons -->
<g fill="none" stroke="#9c9c9c" stroke-width="0.9">
<circle cx="611.2" cy="30.7" r="2.8"/>
<path d="M608.4 31.2 C604.5 30.3 602.3 32.5 604.6 34.6 M613.8 32.2 C617.5 33.6 619 35.8 615.6 37.4 H613.3"/>
<path d="M627.5 27.6 A6 6 0 1 1 625 30.5"/>
<circle cx="630.6" cy="32.5" r="3.2"/>
<circle cx="651.2" cy="28.6" r="1.7"/><circle cx="651.2" cy="36.4" r="1.7"/><circle cx="647.3" cy="32.5" r="1.7"/><circle cx="655.1" cy="32.5" r="1.7"/>
<path d="M651.2 30.3 V34.7 M649 32.5 H653.4"/>
<path d="M671.2 29.6 L673.9 32.3 L671.2 35 L668.5 32.3Z"/>
<path d="M698.5 28.4 L695.2 32.8 L698.5 37.2"/>
</g>
<g fill="#9c9c9c">
<path d="M605.8 38 L608.8 34.8 L611 38 Z"/>
<path d="M624.8 30 L627.6 26.8 L628.8 30.2Z"/>
<path d="M669.5 28.8 L671.2 26.6 L672.9 28.8Z M666.5 30.6 L664.5 32.3 L666.5 34Z M675.9 30.6 L678 32.3 L675.9 34Z M668.9 36 L673.5 36 L671.2 38.6Z"/>
<rect x="684.9" y="30" width="5.7" height="5.7"/>
<path d="M691 32.9 L693.4 31.2 V34.6Z"/>
</g>
<!-- right side options -->
<g fill="none" stroke="#e4e4e4">
<circle cx="1127.7" cy="31.7" r="4.2" stroke-width="1.2"/>
<path d="M1130.7 34.7 L1134 38" stroke-width="1.4"/>
<rect x="1144.8" y="28.5" width="12.2" height="9.5" stroke-width="1.5"/>
<path d="M1182.8 29.8 H1181.3 V37.7 H1193.2 V29.8 H1191.6" stroke-width="1.6"/>
</g>
<rect x="1145.6" y="30.2" width="2.9" height="6" fill="#e4e4e4"/>
<rect x="1186.1" y="28" width="2" height="6.2" fill="#e4e4e4"/>
<path d="M1184.6 29 L1187.1 25.8 L1189.6 29Z" fill="#e4e4e4"/>
<path d="M1166.1 31.6 L1168.4 33.9 L1170.7 31.6" fill="none" stroke="#a8a8a8" stroke-width="0.9"/>
</svg>

</body></html>
